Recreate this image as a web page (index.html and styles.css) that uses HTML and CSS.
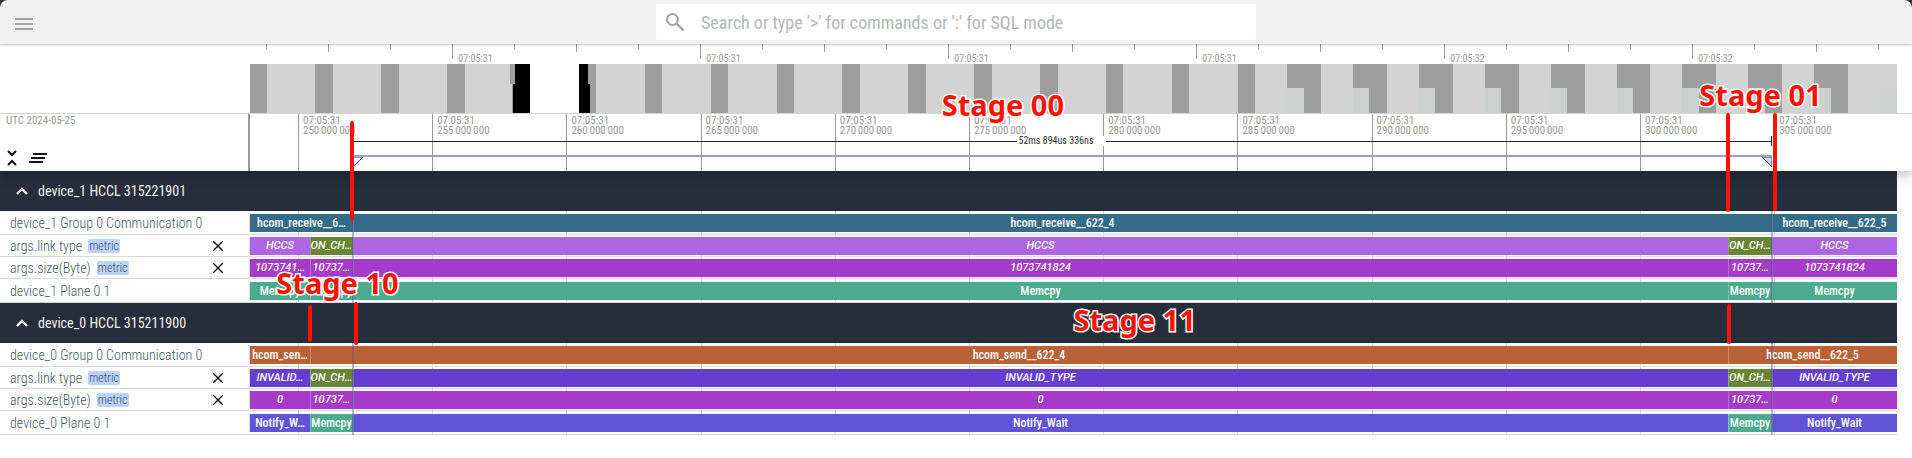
FILE: index.html
```html
<!DOCTYPE html>
<html lang="en">
<head>
<meta charset="utf-8">
<title>Trace viewer</title>
<link rel="stylesheet" href="styles.css">
</head>
<body>
<div class="app">
  <header class="topbar-wrap">
    <div class="topbar">
      <button class="menu" aria-label="Menu"><svg width="18" height="12" viewBox="0 0 18 12"><path d="M0 1h18M0 6h18M0 11h18" stroke="#a3a3a3" stroke-width="2"/></svg></button>
      <label class="search">
        <svg width="20" height="20" viewBox="0 0 20 20" fill="none" stroke="#a3a3a3"><circle cx="7.5" cy="7.5" r="5.5" stroke-width="2"/><path d="M11.5 11.5l7 7" stroke-width="2.4"/></svg>
        <input type="text" aria-label="Search" placeholder="Search or type '&gt;' for commands or ':' for SQL mode">
      </label>
    </div>
  </header>

  <main class="viewer">
    <section class="pinned">
      <div class="overview">
        <div class="ov-ticks">
          <i></i>
          <span></span><span class="mid"></span><span></span><span class="big"><b>07:05:31</b></span>
          <span></span><span class="mid"></span><span></span><span class="big"><b>07:05:31</b></span>
          <span></span><span class="mid"></span><span></span><span class="big"><b>07:05:31</b></span>
          <span></span><span class="mid"></span><span></span><span class="big"><b>07:05:31</b></span>
          <span></span><span class="mid"></span><span></span><span class="big"><b>07:05:32</b></span>
          <span></span><span class="mid"></span><span></span><span class="big"><b>07:05:32</b></span>
          <span></span><span class="mid"></span><span></span>
        </div>
        <svg class="ov-map" viewBox="0 0 1647 49" preserveAspectRatio="none" shape-rendering="crispEdges">
          <rect width="1647" height="49" fill="#d3d3d3"/>
          <path fill="#fff" d="M280 0h49v49h-49z"/>
          <path fill="#000" d="M263 0h17v49h-17zM329 0h11v49h-11z"/>
          <path fill="#9e9e9e" d="M0 0h17v49H0zM65 0h18v49H65zM131 0h18v49h-18zM197 0h18v49h-18zM260 0h5v20h-5zM262 20h1v29h-1zM338 0h8v49h-6V20h-2zM395 0h17v49h-17zM461 0h17v49h-17zM527 0h17v49h-17zM592 0h18v49h-18zM658 0h18v49h-18zM724 0h18v49h-18zM790 0h18v49h-18zM856 0h17v49h-17zM922 0h17v49h-17zM988 0h17v49h-17z"/>
          <path fill="#9e9e9e" d="M1037 0h34v49h-34zM1103 0h34v49h-34zM1169 0h34v49h-34zM1235 0h34v49h-34zM1301 0h34v49h-34zM1367 0h33v49h-33zM1432 0h34v49h-34zM1498 0h34v49h-34zM1564 0h34v49h-34z"/>
          <path fill="#ccd1cf" d="M1037 24h17v25h-17zM1103 24h16v25h-16zM1169 24h16v25h-16zM1235 24h16v25h-16zM1301 24h16v25h-16zM1367 24h16v25h-16zM1432 24h17v25h-17zM1498 24h17v25h-17zM1564 24h17v25h-17zM1630 24h17v25h-17z"/>
        </svg>
      </div>
      <div class="axis">
        <div class="axis-shell">
          <span class="date">UTC 2024-05-25</span>
          <div class="tools">
            <button aria-label="Collapse all"><svg width="24" height="18" viewBox="0 0 24 18" fill="none" stroke="#111" stroke-width="2"><path d="M8 2l4 4 4-4M8 16l4-4 4 4"/></svg></button>
            <button aria-label="Clear pinned tracks"><svg width="18" height="12" viewBox="0 0 18 12" stroke="#111" stroke-width="2"><path d="M4 2h14M2 6h14M0 10h14"/></svg></button>
          </div>
        </div>
        <div class="axis-lane">
          <div class="axis-ticks">
            <i></i>
            <span>07:05:31<br>250&#8198;000&#8198;000</span><span>07:05:31<br>255&#8198;000&#8198;000</span><span>07:05:31<br>260&#8198;000&#8198;000</span><span>07:05:31<br>265&#8198;000&#8198;000</span><span>07:05:31<br>270&#8198;000&#8198;000</span><span>07:05:31<br>275&#8198;000&#8198;000</span><span>07:05:31<br>280&#8198;000&#8198;000</span><span>07:05:31<br>285&#8198;000&#8198;000</span><span>07:05:31<br>290&#8198;000&#8198;000</span><span>07:05:31<br>295&#8198;000&#8198;000</span><span>07:05:31<br>300&#8198;000&#8198;000</span><span>07:05:31<br>305&#8198;000&#8198;000</span>
          </div>
          <div class="span-mark"><hr><span>52ms 894us 336ns</span><hr></div>
          <div class="area-mark">
            <svg width="10" height="11" viewBox="0 0 10 11"><path d="M0 0h10L0 10z" fill="#fff" stroke="#303f9f"/></svg>
            <svg width="10" height="11" viewBox="0 0 10 11"><path d="M10 0H0l10 10z" fill="#d5d9ec" stroke="#303f9f"/></svg>
          </div>
        </div>
      </div>
    </section>

    <section class="tracks">
      <div class="grid-lines"><i></i><span></span><span></span><span></span><span></span><span></span><span></span><span></span><span></span><span></span><span></span><span></span><span></span></div>

      <h2 class="group"><button aria-label="Collapse group"><svg width="12" height="8" viewBox="0 0 12 8" fill="none" stroke="#fff" stroke-width="2.4"><path d="M1 7l5-5 5 5"/></svg></button>device_1 HCCL 315221901</h2>
      <div class="track tall"><div class="shell">device_1 Group 0 Communication 0</div>
        <div class="lane teal"><span style="flex-grow:103">hcom_receive__6…</span><span style="flex-grow:1419">hcom_receive__622_4</span><span style="flex-grow:125">hcom_receive__622_5</span></div></div>
      <div class="track arg"><div class="shell">args.link type <em>metric</em><button aria-label="Close"><svg width="10" height="10" viewBox="0 0 10 10"><path d="M0 0l10 10M10 0L0 10" stroke="#111" stroke-width="1.4"/></svg></button></div>
        <div class="lane orchid"><span style="flex-grow:60">HCCS</span><span class="olive" style="flex-grow:43">ON_CH…</span><span style="flex-grow:1375">HCCS</span><span class="olive" style="flex-grow:44">ON_CH…</span><span style="flex-grow:125">HCCS</span></div></div>
      <div class="track arg"><div class="shell">args.size(Byte) <em>metric</em><button aria-label="Close"><svg width="10" height="10" viewBox="0 0 10 10"><path d="M0 0l10 10M10 0L0 10" stroke="#111" stroke-width="1.4"/></svg></button></div>
        <div class="lane purple"><span style="flex-grow:60">1073741…</span><span style="flex-grow:43">10737…</span><span style="flex-grow:1375">1073741824</span><span style="flex-grow:44">10737…</span><span style="flex-grow:125">1073741824</span></div></div>
      <div class="track tall"><div class="shell">device_1 Plane 0 1</div>
        <div class="lane green"><span style="flex-grow:60">Memcpy</span><span style="flex-grow:43">Memcpy</span><span style="flex-grow:1375">Memcpy</span><span style="flex-grow:44">Memcpy</span><span style="flex-grow:125">Memcpy</span></div></div>

      <h2 class="group"><button aria-label="Collapse group"><svg width="12" height="8" viewBox="0 0 12 8" fill="none" stroke="#fff" stroke-width="2.4"><path d="M1 7l5-5 5 5"/></svg></button>device_0 HCCL 315211900</h2>
      <div class="track tall"><div class="shell">device_0 Group 0 Communication 0</div>
        <div class="lane orange"><span style="flex-grow:60">hcom_sen…</span><span style="flex-grow:1418">hcom_send__622_4</span><span style="flex-grow:169">hcom_send__622_5</span></div></div>
      <div class="track arg"><div class="shell">args.link type <em>metric</em><button aria-label="Close"><svg width="10" height="10" viewBox="0 0 10 10"><path d="M0 0l10 10M10 0L0 10" stroke="#111" stroke-width="1.4"/></svg></button></div>
        <div class="lane indigo"><span style="flex-grow:60">INVALID…</span><span class="olive" style="flex-grow:43">ON_CH…</span><span style="flex-grow:1375">INVALID_TYPE</span><span class="olive" style="flex-grow:44">ON_CH…</span><span style="flex-grow:125">INVALID_TYPE</span></div></div>
      <div class="track arg"><div class="shell">args.size(Byte) <em>metric</em><button aria-label="Close"><svg width="10" height="10" viewBox="0 0 10 10"><path d="M0 0l10 10M10 0L0 10" stroke="#111" stroke-width="1.4"/></svg></button></div>
        <div class="lane purple"><span style="flex-grow:60">0</span><span style="flex-grow:43">10737…</span><span style="flex-grow:1375">0</span><span style="flex-grow:44">10737…</span><span style="flex-grow:125">0</span></div></div>
      <div class="track tall"><div class="shell">device_0 Plane 0 1</div>
        <div class="lane violet"><span style="flex-grow:60">Notify_W…</span><span class="green" style="flex-grow:43">Memcpy</span><span style="flex-grow:1375">Notify_Wait</span><span class="green" style="flex-grow:44">Memcpy</span><span style="flex-grow:125">Notify_Wait</span></div></div>
      <div class="selection"></div>
    </section>

    <div class="notes">
      <i class="s00-line"></i>
      <i class="s01-start"></i><i class="s01-end"></i>
      <i class="s10-start"></i><i class="s10-end"></i>
      <i class="s11-end"></i>
      <strong class="s00">Stage 00</strong>
      <strong class="s01">Stage 01</strong>
      <strong class="s10">Stage 10</strong>
      <strong class="s11">Stage 11</strong>
    </div>
  </main>
</div>
</body>
</html>
```

FILE: styles.css
```css
* { box-sizing: border-box; }
body { margin: 0; background: #fff; font-family: "Roboto Condensed", Roboto, sans-serif; }
button { border: 0; padding: 0; background: none; display: flex; align-items: center; justify-content: center; }
svg { display: block; }

.topbar-wrap { background: #333; position: relative; z-index: 4; }
.topbar { display: grid; grid-template-columns: 1fr 600px 1fr; align-items: center; height: 44px; padding: 0 15px; background: #f1f1f1; border-radius: 8px 8px 0 0; box-shadow: 0 1px 2px rgba(0,0,0,.25); }
.menu { justify-self: start; margin-top: 4px; }
.search { display: flex; align-items: center; height: 36px; padding: 0 9px; gap: 16px; background: #fff; border-radius: 2px; }
.search input { flex: 1; min-width: 0; border: 0; padding: 0; outline: 0; background: none; font: 18px "Roboto Condensed", Roboto, sans-serif; }
.search input::placeholder { color: #b4b7ba; opacity: 1; }

.viewer { position: relative; }
.pinned { position: relative; z-index: 2; background: #fff; box-shadow: 0 4px 12px rgba(0,0,0,.25); }
.overview { padding: 0 15px 0 250px; border-bottom: 1px solid #d5d5d5; }
.ov-ticks { display: grid; grid-template-columns: 163fr repeat(26, 620fr) 187fr; height: 20px; }
.ov-ticks span { min-width: 0; height: 5px; border-left: 1px solid #999; }
.ov-ticks .mid { height: 8px; }
.ov-ticks .big { height: 15px; }
.ov-ticks b { display: block; padding: 9px 0 0 5px; font-size: 10px; line-height: 12px; font-weight: 400; color: #999; white-space: nowrap; }
.ov-map { width: 100%; height: 49px; }

.axis { display: flex; height: 57px; padding-right: 15px; }
.axis-shell { display: flex; flex-direction: column; justify-content: space-between; width: 250px; padding: 0 0 4px 6px; border-right: 2px solid #999; }
.date { font-size: 11px; line-height: 14px; color: #999; }
.tools { display: flex; align-items: center; gap: 5px; }
.tools button:first-child { margin-left: -6px; }
.axis-lane { position: relative; flex: 1; }
.axis-ticks, .grid-lines { display: grid; grid-template-columns: 480fr repeat(11, 1342fr) 1228fr; }
.axis-ticks { height: 100%; }
.axis-ticks span, .grid-lines span { min-width: 0; border-left: 1px solid #999; }
.axis-ticks span { padding: 2px 0 0 4px; font-size: 11px; line-height: 10px; color: #999; white-space: nowrap; }
.span-mark { position: absolute; left: 6.25%; right: 7.59%; top: 22px; display: flex; align-items: center; height: 10px; border-right: 1px solid #222; }
.span-mark hr { flex: 1; margin: 0; border: 0; border-top: 1px solid #222; }
.span-mark span { width: 89px; padding-left: 1px; background: #fff; font-size: 10px; line-height: 10px; color: #333; white-space: nowrap; }
.area-mark { position: absolute; left: 6.25%; right: 7.59%; top: 41px; display: flex; justify-content: space-between; border-top: 2px solid #98a0cc; }

.tracks { position: relative; margin-right: 15px; }
.grid-lines { position: absolute; inset: 0 0 0 250px; }
.grid-lines span { border-color: #d9d9d9; }
.group { position: relative; z-index: 1; display: flex; align-items: center; gap: 10px; height: 40px; margin: 0; padding: 0 16px; background: #262e3c; border-bottom: 1px solid #1d2530; color: #f2f2f2; font-size: 14px; font-weight: 400; }
.track { position: relative; display: flex; height: 22px; padding-top: 2px; border-bottom: 1px solid #d9d9d9; }
.tall { height: 24px; padding-top: 3px; }
.shell { display: flex; align-items: center; width: 250px; height: 18px; padding: 0 26px 0 10px; border-right: 1px solid #d9d9d9; font-size: 14px; font-weight: 300; color: #4a5768; white-space: nowrap; }
.shell em { margin-left: 6px; padding: 0 1px; border-radius: 2px; background: #bad4fd; font-size: 12px; line-height: 14px; font-style: normal; color: #3e4e68; }
.shell button { margin-left: auto; }
.lane { display: flex; flex: 1; min-width: 0; height: 18px; }
.lane span { flex: 1 0 0; min-width: 0; text-align: center; color: #fff; font-size: 12px; line-height: 18px; font-weight: 500; white-space: nowrap; overflow: hidden; }
.lane span + span { box-shadow: inset 1px 0 rgba(255,255,255,.25); }
.arg .lane span { font: italic 500 11px/17px Roboto, sans-serif; }
.teal { background: #346c87; }
.orchid { background: #ae65e2; }
.purple { background: #a63bc9; }
.green { background: #4bab8c; }
.olive { background: #678536; }
.orange { background: #b96137; }
.indigo { background: #653dd1; }
.violet { background: #6053d7; }
.selection { position: absolute; top: 0; bottom: 0; left: calc(250px + (100% - 250px) * .062); right: calc((100% - 250px) * .0753); border: solid rgba(70,80,160,.4); border-width: 0 2px; }

/* Annotations drawn over the timeline */
.notes { position: absolute; z-index: 5; inset: 0 15px 0 250px; pointer-events: none; }
.notes i { position: absolute; width: 4px; border-radius: 2px; background: #fe1100; }
.notes strong { position: absolute; font: 700 29px/28px "Noto Sans", sans-serif; color: #fe1100; white-space: nowrap; -webkit-text-stroke: 3px #fff; paint-order: stroke fill; }
.s00-line { left: 6.07%; top: 77px; height: 100px; }
.s01-start { left: 89.62%; top: 69px; height: 99px; }
.s01-end { left: 92.47%; top: 69px; height: 98px; }
.s10-start { left: 3.52%; top: 261px; height: 37px; }
.s10-end { left: 6.31%; top: 258px; height: 43px; }
.s11-end { left: 89.68%; top: 260px; height: 40px; }
.s00 { left: 42%; top: 47px; }
.s01 { left: 88%; top: 37px; }
.s10 { left: 1.6%; top: 225px; }
.s11 { left: 50%; top: 262px; }
```
